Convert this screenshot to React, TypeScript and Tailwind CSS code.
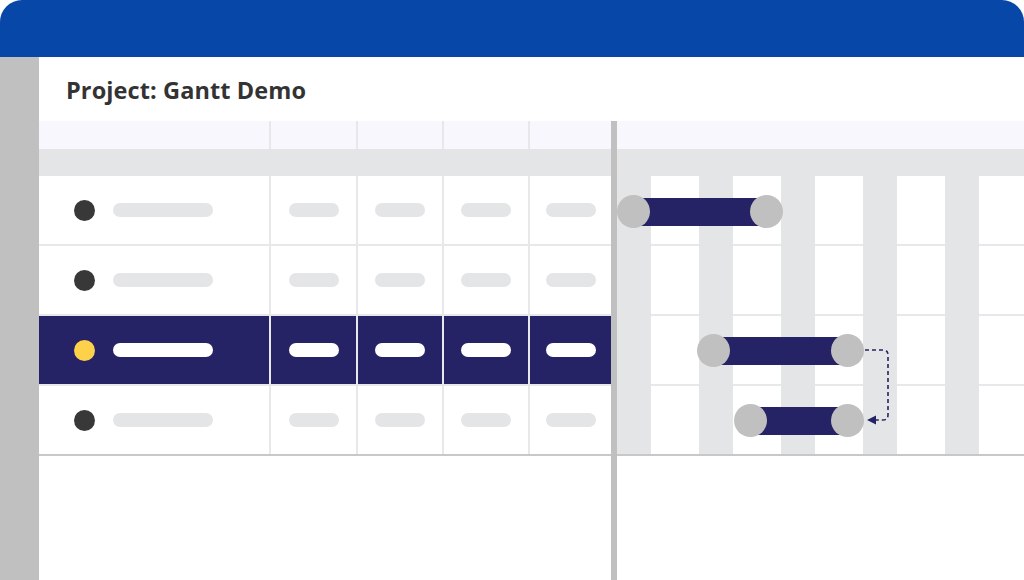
import React from "react";

const cols = [
  { w: "w-[230px]", bar: "w-[100px]", first: true },
  { w: "w-[87px]", bar: "w-[50px]" },
  { w: "w-[86px]", bar: "w-[50px]" },
  { w: "w-[86px]", bar: "w-[50px]" },
  { w: "w-[83px]", bar: "w-[50px]" },
];

function Row({ active, last }: { active?: boolean; last?: boolean }) {
  return (
    <div
      className={`flex h-[70px] ${last ? "border-b-2 border-[#c8c8c8]" : "border-b-2 border-[#e8e8ea]"} ${
        active ? "bg-[#262266]" : "bg-white"
      }`}
    >
      {cols.map((c, i) => (
        <div
          key={i}
          className={`${c.w} h-full flex items-center ${i > 0 ? "border-l-2 border-[#e8e8ea] justify-center" : "pl-[35px]"}`}
        >
          {c.first && (
            <div
              className={`w-[21px] h-[21px] rounded-full mr-[18px] ${active ? "bg-[#fdd24a]" : "bg-[#383838]"}`}
            />
          )}
          <div className={`${c.bar} h-[14px] rounded-full ${active ? "bg-white" : "bg-[#e4e5e7]"}`} />
        </div>
      ))}
    </div>
  );
}

function GanttBar({ left, width, top }: { left: number; width: number; top: number }) {
  return (
    <div className="absolute flex items-center" style={{ left, top, width, height: 33 }}>
      <div className="absolute left-[16px] right-[16px] h-[28px] bg-[#262266]" />
      <div className="relative w-[33px] h-[33px] rounded-full bg-[#c0c0c0]" />
      <div className="flex-1" />
      <div className="relative w-[33px] h-[33px] rounded-full bg-[#c0c0c0]" />
    </div>
  );
}

export default function App() {
  return (
    <div
      className="w-[1024px] h-[580px] flex flex-col bg-white overflow-hidden"
      style={{ fontFamily: '"Open Sans", "Noto Sans", sans-serif' }}
    >
      <div className="h-[57px] shrink-0 bg-[#0647a7] rounded-t-[22px]" />
      <div className="flex flex-1 min-h-0">
        <div className="w-[39px] shrink-0 bg-[#c0c0c0]" />
        <div className="flex-1 flex flex-col">
          <div className="h-[64px] shrink-0 flex items-center pl-[27px] pt-[4px]">
            <h1 className="text-[23.5px] leading-none font-bold text-[#333333] tracking-[0.1px]">Project: Gantt Demo</h1>
          </div>
          <div className="flex flex-1">
            {/* table */}
            <div className="w-[572px] shrink-0 flex flex-col">
              <div className="h-[28px] flex bg-[#f8f7fd]">
                {cols.map((c, i) => (
                  <div key={i} className={`${c.w} h-full ${i > 0 ? "border-l-2 border-[#e8e8ea]" : ""}`} />
                ))}
              </div>
              <div className="h-[27px] bg-[#e4e5e7]" />
              <Row />
              <Row />
              <Row active />
              <Row last />
            </div>
            {/* divider */}
            <div className="w-[6px] shrink-0 bg-[#c0c0c0]" />
            {/* gantt */}
            <div className="flex-1 flex flex-col">
              <div className="h-[28px] bg-[#f8f7fd]" />
              <div className="h-[27px] bg-[#e4e5e7]" />
              <div className="relative">
                <div className="flex flex-col">
                  <div className="h-[70px] border-b-2 border-[#e8e8ea]" />
                  <div className="h-[70px] border-b-2 border-[#e8e8ea]" />
                  <div className="h-[70px] border-b-2 border-[#e8e8ea]" />
                  <div className="h-[70px] border-b-2 border-[#c8c8c8]" />
                </div>
                <div className="absolute left-0 right-0 top-0 h-[278px] flex gap-[48px]">
                  {[0, 1, 2, 3, 4].map((i) => (
                    <div key={i} className="w-[34px] shrink-0 h-full bg-[#e4e5e7]" />
                  ))}
                </div>
                <GanttBar left={0} width={166} top={19} />
                <GanttBar left={80} width={167} top={158} />
                <GanttBar left={117} width={130} top={228} />
                <svg className="absolute left-0 top-0" width="407" height="280">
                  <path
                    d="M248 174 H266 Q271 174 271 179 V239 Q271 244 266 244 H258"
                    fill="none"
                    stroke="#262266"
                    strokeWidth="1.6"
                    strokeDasharray="4 3"
                  />
                  <polygon points="250,244 259,239.5 259,248.5" fill="#262266" />
                </svg>
              </div>
            </div>
          </div>
        </div>
      </div>
    </div>
  );
}
